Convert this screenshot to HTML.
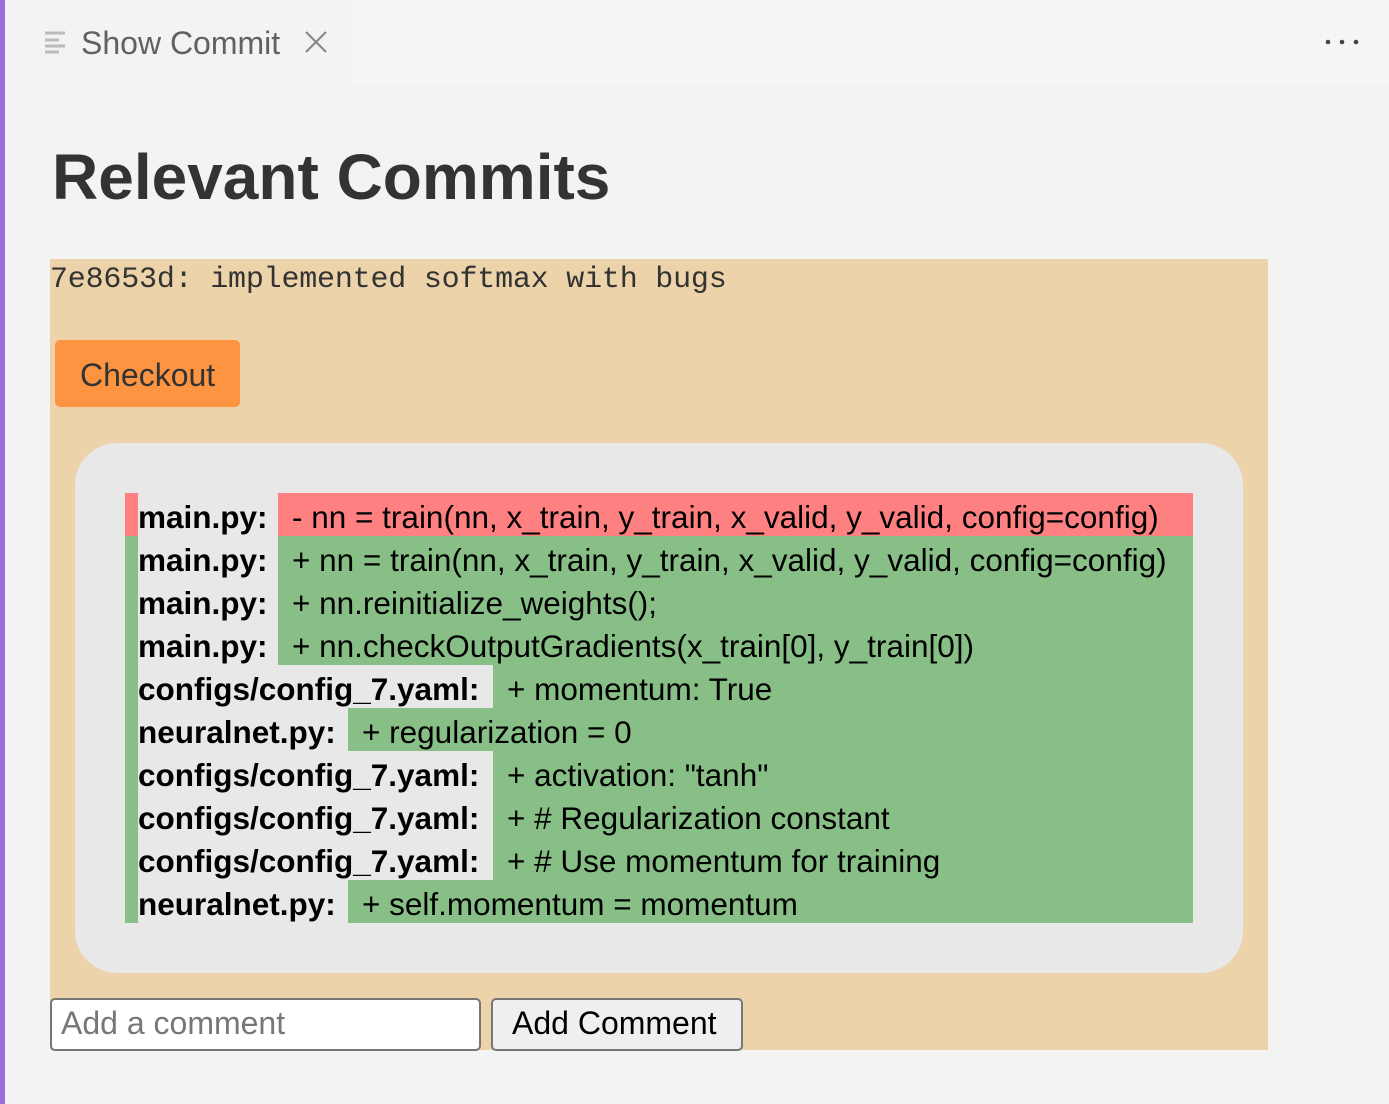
<!DOCTYPE html>
<html><head><meta charset="utf-8"><style>
*{margin:0;padding:0;box-sizing:border-box}
body{width:1389px;height:1104px;background:#f3f3f3;font-family:"Liberation Sans",sans-serif;position:relative;overflow:hidden}
.bar{position:absolute;left:0;top:0;width:5px;height:1104px;background:#9b6fdb}
.tabstrip{position:absolute;left:350px;top:0;width:1039px;height:85px;background:#f5f5f5}
.tab{position:absolute;left:5px;top:0;width:345px;height:85px;background:#f3f3f3}
.tab .t{position:absolute;left:76px;top:25px;font-size:32px;color:#616161}
h1{position:absolute;left:52px;top:140px;font-size:64px;font-weight:bold;color:#333}
.box{position:absolute;left:50px;top:259px;width:1218px;height:791px;background:#edd3aa}
.hash{position:absolute;left:0;top:4px;font-family:"Liberation Mono",monospace;font-size:30px;letter-spacing:-0.2px;color:#333;white-space:pre}
.co{position:absolute;left:5px;top:81px;width:185px;height:67px;background:#fd9441;border-radius:5px;font-size:32px;color:#333;padding:17px 0 0 25px}
.inner{position:absolute;left:25px;top:184px;width:1168px;height:530px;background:#e8e8e8;border-radius:42px}
.row{position:absolute;left:125px;height:43px;width:1068px;display:flex;font-size:31.5px;white-space:nowrap}
.row .b{width:13px}
.row .l{font-weight:bold;color:#000;line-height:48px;background:#e8e8e8}
.row .c{flex:1;line-height:48px;padding-left:14px;color:#000}
.r .b,.r .c{background:#fe8080}
.g .b,.g .c{background:#88bf87}
.in{position:absolute;left:0;top:739px;width:431px;height:53px;background:#fff;border:2px solid #767676;border-radius:5px;font-size:32px;color:#777;padding:5px 0 0 9px}
.bt{position:absolute;left:441px;top:739px;width:252px;height:53px;background:#efefef;border:2px solid #767676;border-radius:5px;font-size:32px;color:#000;padding:5px 0 0 19px}
</style></head><body>
<div class="bar"></div>
<div class="tabstrip"></div>
<div class="tab">
<svg style="position:absolute;left:38px;top:30px" width="24" height="24"><g stroke="#bbb" stroke-width="3"><line x1="2" y1="3" x2="22" y2="3"/><line x1="2" y1="10" x2="16" y2="10"/><line x1="2" y1="16" x2="22" y2="16"/><line x1="2" y1="22" x2="16" y2="22"/></g></svg>
<div class="t">Show Commit</div>
<svg style="position:absolute;left:300px;top:31px" width="22" height="22"><g stroke="#888" stroke-width="2.2"><line x1="1" y1="1" x2="21" y2="21"/><line x1="21" y1="1" x2="1" y2="21"/></g></svg>
</div>
<svg style="position:absolute;left:1325px;top:38px" width="36" height="8"><g fill="#444"><circle cx="3" cy="4" r="2.3"/><circle cx="17" cy="4" r="2.3"/><circle cx="31" cy="4" r="2.3"/></g></svg>
<h1>Relevant Commits</h1>
<div class="box">
<div class="hash">7e8653d: implemented softmax with bugs</div>
<div class="co">Checkout</div>
<div class="inner"></div>
<div class="in">Add a comment</div>
<div class="bt">Add Comment</div>
</div>
<div class="row r" style="top:493px"><div class="b"></div><div class="l" style="width:140px">main.py:</div><div class="c">- nn = train(nn, x_train, y_train, x_valid, y_valid, config=config)</div></div>
<div class="row g" style="top:536px"><div class="b"></div><div class="l" style="width:140px">main.py:</div><div class="c">+ nn = train(nn, x_train, y_train, x_valid, y_valid, config=config)</div></div>
<div class="row g" style="top:579px"><div class="b"></div><div class="l" style="width:140px">main.py:</div><div class="c">+ nn.reinitialize_weights();</div></div>
<div class="row g" style="top:622px"><div class="b"></div><div class="l" style="width:140px">main.py:</div><div class="c">+ nn.checkOutputGradients(x_train[0], y_train[0])</div></div>
<div class="row g" style="top:665px"><div class="b"></div><div class="l" style="width:355px">configs/config_7.yaml:</div><div class="c">+ momentum: True</div></div>
<div class="row g" style="top:708px"><div class="b"></div><div class="l" style="width:210px">neuralnet.py:</div><div class="c">+ regularization = 0</div></div>
<div class="row g" style="top:751px"><div class="b"></div><div class="l" style="width:355px">configs/config_7.yaml:</div><div class="c">+ activation: "tanh"</div></div>
<div class="row g" style="top:794px"><div class="b"></div><div class="l" style="width:355px">configs/config_7.yaml:</div><div class="c">+ # Regularization constant</div></div>
<div class="row g" style="top:837px"><div class="b"></div><div class="l" style="width:355px">configs/config_7.yaml:</div><div class="c">+ # Use momentum for training</div></div>
<div class="row g" style="top:880px"><div class="b"></div><div class="l" style="width:210px">neuralnet.py:</div><div class="c">+ self.momentum = momentum</div></div>
</body></html>
